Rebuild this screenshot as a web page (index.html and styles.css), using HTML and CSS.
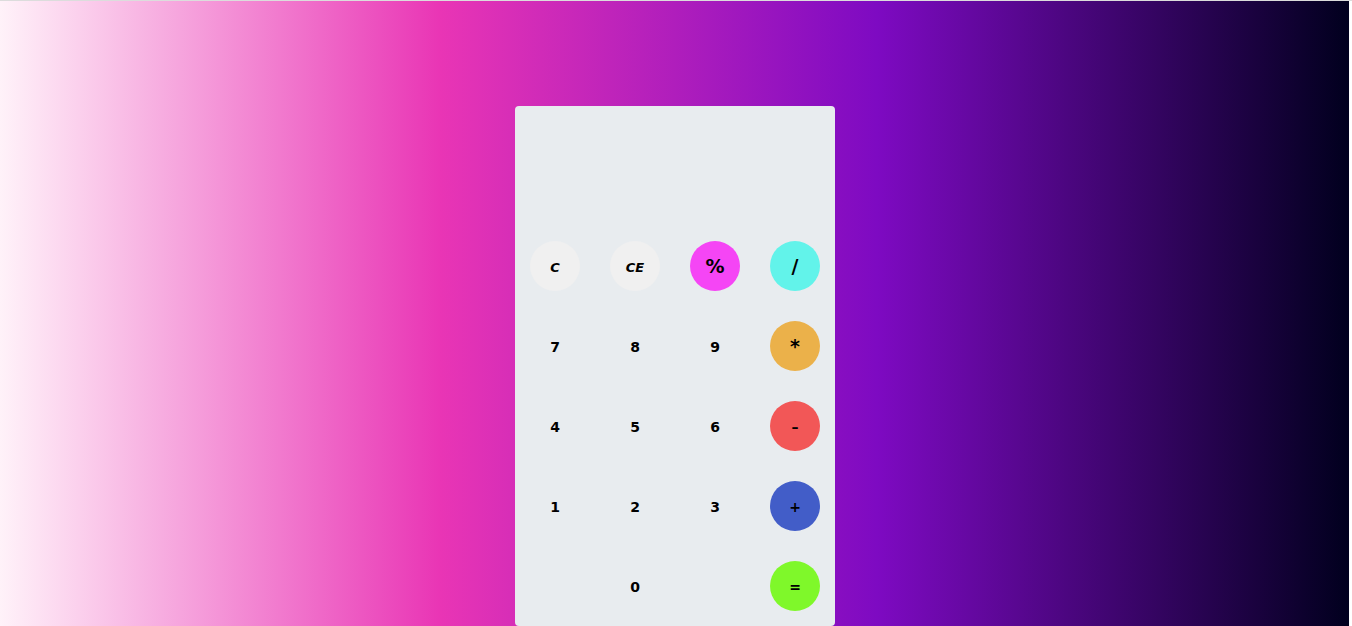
FILE: index.html
```html
<!DOCTYPE html>
<html>
<head>
<meta charset="utf-8">
<link rel="stylesheet" href="styles.css">
</head>
<body>
<div class="page">
  <div class="calc">
    <div class="display"></div>
    <div class="keys">
      <button class="key light">C</button>
      <button class="key light">CE</button>
      <button class="key big pink">%</button>
      <button class="key big cyan">/</button>
      <button class="key">7</button>
      <button class="key">8</button>
      <button class="key">9</button>
      <button class="key big orange">*</button>
      <button class="key">4</button>
      <button class="key">5</button>
      <button class="key">6</button>
      <button class="key red">–</button>
      <button class="key">1</button>
      <button class="key">2</button>
      <button class="key">3</button>
      <button class="key blue">+</button>
      <span class="key empty"></span>
      <button class="key">0</button>
      <span class="key empty"></span>
      <button class="key green">=</button>
    </div>
  </div>
</div>
</body>
</html>
```

FILE: styles.css
```css
html, body {
  margin: 0;
  padding: 0;
  height: 100%;
  overflow: hidden;
}
body {
  background: #ffffff;
  border-top: 1px solid #dcdcdc;
  box-sizing: border-box;
}
.page {
  width: 1349px;
  height: 625px;
  background: linear-gradient(to right, #fff2f9 0%, #e935b5 32.6%, #7e0ac2 65%, #01001e 100%);
  display: flex;
  justify-content: center;
  align-items: flex-start;
  padding-top: 105px;
  box-sizing: border-box;
}
.calc {
  width: 320px;
  margin-left: 1px;
  background: #e8ecef;
  border-radius: 4px;
  padding: 0 15px 15px;
  box-sizing: border-box;
}
.display {
  height: 135px;
}
.keys {
  display: grid;
  grid-template-columns: repeat(4, 50px);
  grid-auto-rows: 50px;
  column-gap: 30px;
  row-gap: 30px;
}
.key {
  width: 50px;
  height: 50px;
  border: none;
  border-radius: 50%;
  background: transparent;
  padding: 2px 0 0;
  box-sizing: border-box;
  font-family: "Comic Sans MS", "DejaVu Sans", sans-serif;
  font-weight: bold;
  font-size: 14px;
  color: #000;
  display: flex;
  align-items: center;
  justify-content: center;
}
.key.big { font-size: 19px; padding-top: 0; }
.light { background: #f0f0f0; font-style: italic; font-size: 13px; }
.pink { background: #f545f5; }
.cyan { background: #62f3ea; }
.orange { background: #ebb14a; }
.red { background: #f25757; }
.blue { background: #425dc8; }
.green { background: #7ff82a; }
```
